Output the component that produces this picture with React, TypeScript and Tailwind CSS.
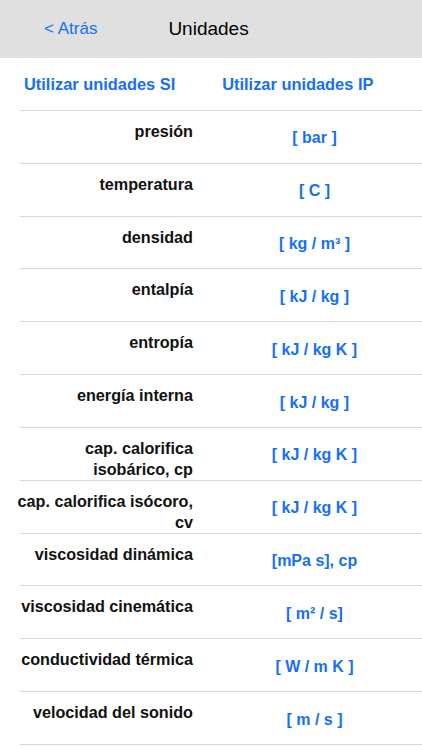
const rows: [string, string][] = [
  ["presión", "[ bar ]"],
  ["temperatura", "[ C ]"],
  ["densidad", "[ kg / m³ ]"],
  ["entalpía", "[ kJ / kg ]"],
  ["entropía", "[ kJ / kg K ]"],
  ["energía interna", "[ kJ / kg ]"],
  ["cap. calorifica isobárico, cp", "[ kJ / kg K ]"],
  ["cap. calorifica isócoro, cv", "[ kJ / kg K ]"],
  ["viscosidad dinámica", "[mPa s], cp"],
  ["viscosidad cinemática", "[ m² / s]"],
  ["conductividad térmica", "[ W / m K ]"],
  ["velocidad del sonido", "[ m / s ]"],
];

export default function App() {
  return (
    <div className="w-[422px] h-[750px] overflow-hidden bg-white font-['Liberation_Sans',Arial,sans-serif]">
      {/* nav bar */}
      <div className="h-[58px] bg-[#e0e0e0] flex items-center">
        <span className="ml-[44px] text-[17px] text-[#1670f5]">&lt; Atrás</span>
        <span className="ml-[71px] text-[19px] text-black">Unidades</span>
      </div>

      {/* unit system buttons */}
      <div className="h-[52px] flex items-center text-[16.4px] font-bold text-[#1670f5]">
        <span className="ml-[24px]">Utilizar unidades SI</span>
        <span className="ml-[47px]">Utilizar unidades IP</span>
      </div>

      {rows.map(([label, unit]) => (
        <div key={label}>
          <div className="ml-[20px] h-px bg-[#d6d6d6]" />
          <div className="h-[51.83px] flex">
            <div className="ml-[14px] w-[179px] shrink-0 text-right pt-[10px] text-[16.2px] leading-[21px] font-bold text-[#111]">
              {label}
            </div>
            <div className="flex-1 flex items-center justify-center pt-[3px] pl-[14px] text-[16px] font-bold text-[#1670f5]">
              {unit}
            </div>
          </div>
        </div>
      ))}
      <div className="ml-[20px] h-px bg-[#d6d6d6]" />
    </div>
  );
}
